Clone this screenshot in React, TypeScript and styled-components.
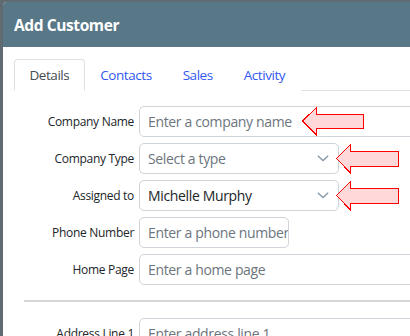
import styled, { createGlobalStyle } from "styled-components";

const GlobalStyle = createGlobalStyle`
  html, body {
    margin: 0;
    padding: 0;
    overflow: hidden;
    background: #5f6b71;
  }
  * {
    box-sizing: border-box;
  }
`;

const font = `"Open Sans", "Noto Sans", sans-serif`;

const Dialog = styled.div`
  margin: 2px 0 0 3px;
  width: 540px;
  height: 400px;
  background: #ffffff;
  border-top-left-radius: 4px;
  overflow: hidden;
  font-family: ${font};
`;
const Header = styled.div`
  height: 45px;
  background: #587787;
  display: flex;
  align-items: center;
  padding: 0 11px;
`;
const Title = styled.h5`
  margin: 0;
  color: #ffffff;
  font-size: 15.5px;
  font-weight: 700;
  letter-spacing: -0.4px;
`;
const Body = styled.div`
  padding: 12px 11px;
`;
const Tabs = styled.div`
  display: flex;
  border-bottom: 1px solid #dee2e6;
`;
const Tab = styled.div<{ $active?: boolean }>`
  height: 32px;
  margin-bottom: -1px;
  padding: 0 14.5px;
  display: flex;
  align-items: center;
  font-size: 13.5px;
  letter-spacing: -0.45px;
  color: ${(p) => (p.$active ? "#444a50" : "#3358f0")};
  border: 1px solid ${(p) => (p.$active ? "#dee2e6" : "transparent")};
  border-bottom-color: ${(p) => (p.$active ? "#ffffff" : "transparent")};
  border-radius: 4px 4px 0 0;
  background: #ffffff;
`;
const Form = styled.div`
  margin-top: 15px;
  display: flex;
  flex-direction: column;
  gap: 6px;
`;
const Row = styled.div`
  position: relative;
  display: grid;
  grid-template-columns: 120px 1fr;
  column-gap: 5px;
  align-items: center;
`;
const Label = styled.label`
  text-align: right;
  font-size: 12px;
  letter-spacing: -0.3px;
  color: #212529;
`;
const Field = styled.div<{ $width?: number }>`
  width: ${(p) => (p.$width ? `${p.$width}px` : "100%")};
  height: 31px;
  border: 1px solid #ced4da;
  border-radius: 5px;
  padding: 0 9px 0 8px;
  display: flex;
  align-items: center;
  justify-content: space-between;
  font-size: 14px;
  letter-spacing: -0.35px;
  white-space: nowrap;
  overflow: hidden;
`;
const Placeholder = styled.span`
  color: #6c757d;
`;
const Value = styled.span`
  color: #212529;
`;
const Separator = styled.div`
  height: 2px;
  background: #d6d6d6;
  margin: 9px 0 10px 10px;
`;
const ArrowMark = styled.svg<{ $left: number }>`
  position: absolute;
  left: ${(p) => p.$left}px;
  top: 1px;
`;

function Chevron() {
  return (
    <svg width="12" height="7" viewBox="0 0 12 7">
      <path d="M0.8 0.8 L6 5.6 L11.2 0.8" fill="none" stroke="#8797a6" strokeWidth="1.3" />
    </svg>
  );
}

function Arrow({ left, w, h }: { left: number; w: number; h: number }) {
  const m = h / 2;
  const shaftTop = 7;
  const shaftBottom = h - 7;
  return (
    <ArrowMark $left={left} width={w + 1} height={h + 1} viewBox={`0 0 ${w + 1} ${h + 1}`}>
      <polygon
        points={`0.5,${m} 14.5,0.5 14.5,${shaftTop} ${w},${shaftTop} ${w},${shaftBottom} 14.5,${shaftBottom} 14.5,${h}`}
        fill="#ffd9d9"
        stroke="#ff0000"
        strokeWidth="1"
        shapeRendering="crispEdges"
      />
    </ArrowMark>
  );
}

export default function App() {
  return (
    <>
      <GlobalStyle />
      <Dialog>
        <Header>
          <Title>Add Customer</Title>
        </Header>
        <Body>
          <Tabs>
            <Tab $active>Details</Tab>
            <Tab>Contacts</Tab>
            <Tab>Sales</Tab>
            <Tab>Activity</Tab>
          </Tabs>
          <Form>
            <Row>
              <Label>Company Name</Label>
              <Field>
                <Placeholder>Enter a company name</Placeholder>
              </Field>
              <Arrow left={288} w={61} h={28} />
            </Row>
            <Row>
              <Label>Company Type</Label>
              <Field $width={200}>
                <Placeholder>Select a type</Placeholder>
                <Chevron />
              </Field>
              <Arrow left={322} w={62} h={29} />
            </Row>
            <Row>
              <Label>Assigned to</Label>
              <Field $width={200}>
                <Value>Michelle Murphy</Value>
                <Chevron />
              </Field>
              <Arrow left={322} w={62} h={29} />
            </Row>
            <Row>
              <Label>Phone Number</Label>
              <Field $width={150}>
                <Placeholder>Enter a phone number</Placeholder>
              </Field>
            </Row>
            <Row>
              <Label>Home Page</Label>
              <Field>
                <Placeholder>Enter a home page</Placeholder>
              </Field>
            </Row>
            <Separator />
            <Row>
              <Label>Address Line 1</Label>
              <Field>
                <Placeholder>Enter address line 1</Placeholder>
              </Field>
            </Row>
          </Form>
        </Body>
      </Dialog>
    </>
  );
}
